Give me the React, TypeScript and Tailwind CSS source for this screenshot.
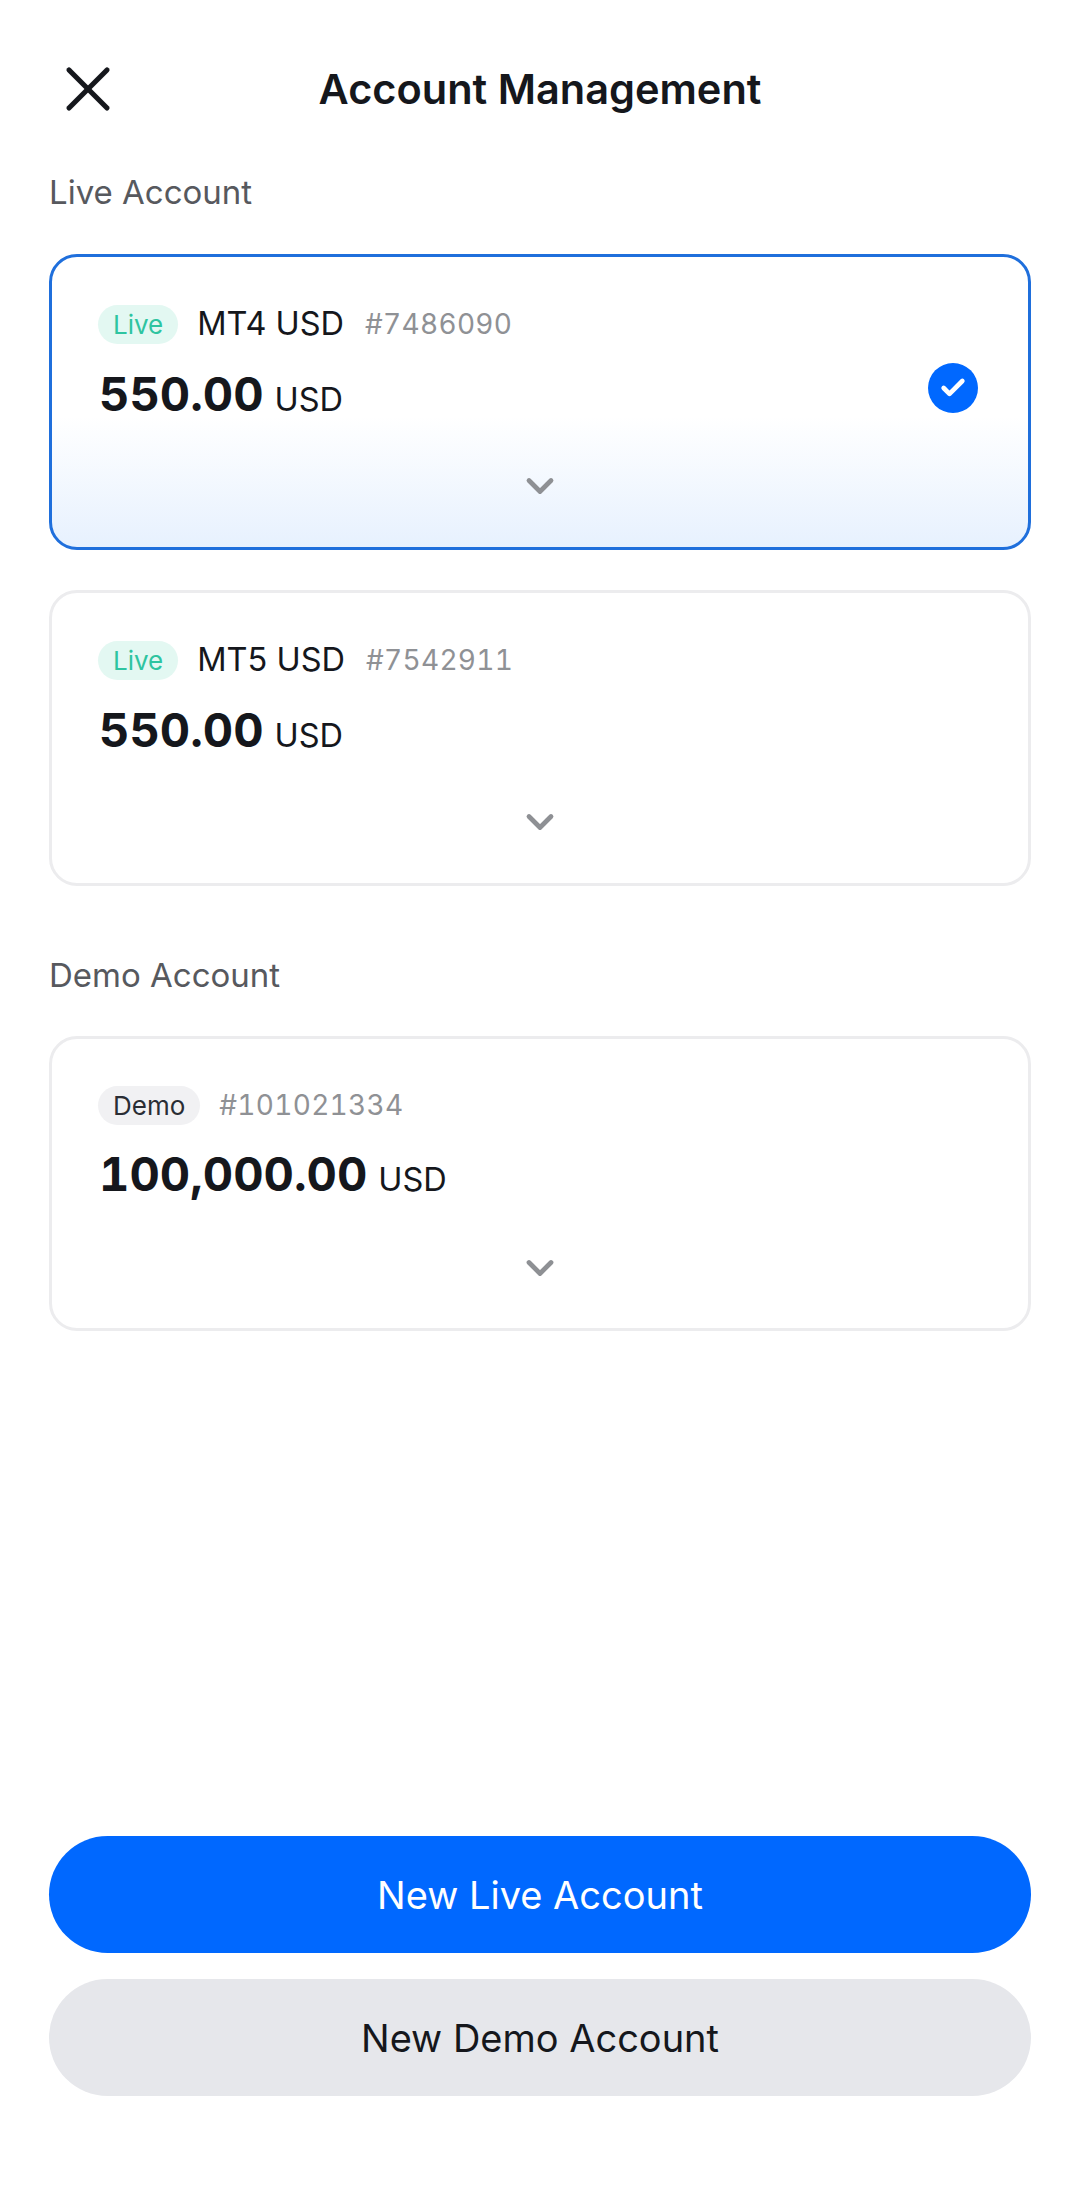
import { X, ChevronDown, Check } from 'lucide-react';

interface AccountCardProps {
  badge: string;
  name?: string;
  id: string;
  amount: string;
  selected?: boolean;
  short?: boolean;
}

function AccountCard({ badge, name, id, amount, selected, short }: AccountCardProps) {
  const isLive = badge === 'Live';
  return (
    <div
      className={`relative rounded-[28px] border-[3px] pl-[46px] ${short ? 'h-[295px] pt-[46px]' : 'h-[296px] pt-[47px]'} ${
        selected
          ? 'border-[#1f6fdc] bg-gradient-to-b from-white from-55% to-[#e7f1fe]'
          : 'border-[#ececee] bg-white'
      }`}
    >
      <div className="flex h-[40px] items-center">
        <span
          className={`flex h-[39px] items-center rounded-full px-[15px] text-[26px] ${
            isLive ? 'bg-[#e3f8f2] text-[#2ec4a0]' : 'bg-[#f1f1f3] text-[#2a2d34]'
          }`}
        >
          {badge}
        </span>
        {name && <span className="ml-[19px] text-[32.5px] text-[#15171c]">{name}</span>}
        <span className={`text-[28px] tracking-[0.3px] text-[#8f9195] tabular-nums ${name ? 'ml-[21px]' : 'ml-[19px]'}`}>{id}</span>
      </div>
      <div className={`ml-[1px] flex items-baseline ${short ? 'mt-[19px]' : 'mt-[20px]'}`}>
        <span className="text-[47px] leading-[60px] font-bold text-[#15171c] tabular-nums">{amount}</span>
        <span className="ml-[11px] text-[32.5px] text-[#15171c]">USD</span>
      </div>
      {selected && (
        <div className="absolute top-[106px] right-[50px] flex h-[50px] w-[50px] items-center justify-center rounded-full bg-[#0068ff]">
          <Check size={28} strokeWidth={4} className="text-white" />
        </div>
      )}
      <div className="absolute top-[207px] right-0 left-0 flex justify-center">
        <ChevronDown size={44} strokeWidth={2.6} className="text-[#8e9094]" />
      </div>
    </div>
  );
}

export default function App() {
  return (
    <div className="flex h-[2190px] flex-col bg-white pr-[47px] pl-[49px] font-['Inter',sans-serif]">
      <header className="relative flex h-[177px] items-center justify-center pt-[2px]">
        <X size={76} strokeWidth={1.6} className="absolute top-[51px] left-[1px] text-[#15171c]" />
        <h1 className="text-[41.5px] font-semibold text-[#15171c]">Account Management</h1>
      </header>

      <h2 className="text-[33px] leading-[30px] text-[#57595e]">Live Account</h2>
      <div className="mt-[47px] flex flex-col gap-[40px]">
        <AccountCard badge="Live" name="MT4 USD" id="#7486090" amount="550.00" selected />
        <AccountCard badge="Live" name="MT5 USD" id="#7542911" amount="550.00" />
      </div>

      <h2 className="mt-[74px] text-[33px] leading-[30px] text-[#57595e]">Demo Account</h2>
      <div className="mt-[46px]">
        <AccountCard badge="Demo" id="#101021334" amount="100,000.00" short />
      </div>

      <div className="mt-auto mb-[94px] flex flex-col gap-[26px]">
        <button className="h-[117px] rounded-[59px] bg-[#0068ff] pt-[2px] text-[38px] text-white">New Live Account</button>
        <button className="h-[117px] rounded-[59px] bg-[#e6e7eb] pt-[2px] text-[38px] text-[#15171c]">New Demo Account</button>
      </div>
    </div>
  );
}
